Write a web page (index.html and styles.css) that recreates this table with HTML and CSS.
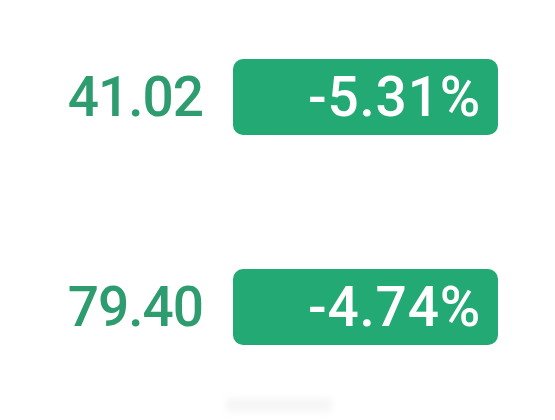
FILE: index.html
```html
<!DOCTYPE html>
<html>
<head>
<meta charset="utf-8">
<link rel="stylesheet" href="styles.css">
</head>
<body>
<div class="list">
  <div class="row">
    <div class="price">41.02</div>
    <div class="badge">-5.31%</div>
  </div>
  <div class="row">
    <div class="price">79.40</div>
    <div class="badge">-4.74%</div>
  </div>
</div>
<div class="ghost"></div>
</body>
</html>
```

FILE: styles.css
```css
html, body {
  margin: 0;
  padding: 0;
  background: #ffffff;
}
body {
  width: 555px;
  height: 420px;
  overflow: hidden;
  font-family: Roboto, "Liberation Sans", sans-serif;
}
.list {
  display: flex;
  flex-direction: column;
  gap: 134px;
  padding-top: 59px;
  padding-left: 40px;
}
.row {
  display: grid;
  grid-template-columns: 163px 265px;
  column-gap: 30px;
  align-items: center;
}
.price {
  text-align: right;
  font-size: 55px;
  font-weight: 500;
  color: #2d9c6e;
  line-height: 76px;
  letter-spacing: -1px;
}
.badge {
  height: 76px;
  border-radius: 10px;
  background: #23a973;
  color: #ffffff;
  font-size: 55px;
  font-weight: 500;
  line-height: 76px;
  text-align: right;
  padding-right: 17px;
  box-sizing: border-box;
  letter-spacing: 0.8px;
}
.ghost {
  margin: 53px 0 0 226px;
  width: 106px;
  height: 14px;
  background: #f6f6f6;
  border-radius: 3px;
  filter: blur(3px);
}
```
